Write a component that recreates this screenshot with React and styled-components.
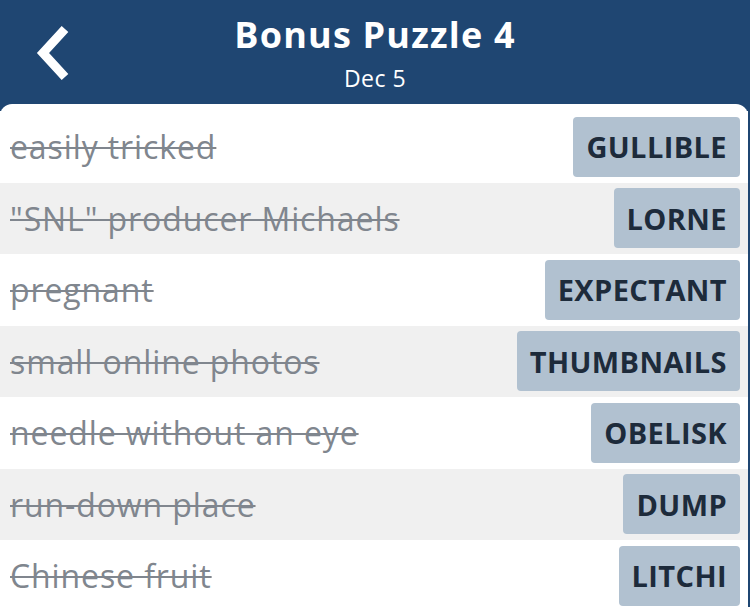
import React from 'react';
import styled, { createGlobalStyle } from 'styled-components';

const GlobalStyle = createGlobalStyle`
  html, body {
    margin: 0;
    padding: 0;
    background: #1f4672;
    font-family: "Open Sans", Lato, sans-serif;
  }
`;

const Page = styled.div`
  width: 750px;
  height: 607px;
  overflow: hidden;
  background: #1f4672;
  display: flex;
  flex-direction: column;
`;

const Header = styled.header`
  height: 104px;
  flex-shrink: 0;
  display: flex;
  flex-direction: column;
  align-items: center;
  position: relative;
  color: #fff;
`;

const BackButton = styled.button`
  position: absolute;
  left: 30px;
  top: 24px;
  width: 46px;
  height: 58px;
  border: 0;
  padding: 0;
  background: none;
  display: flex;
  align-items: center;
  justify-content: center;
`;

const Title = styled.h1`
  margin: 12px 0 0;
  font-size: 36px;
  font-weight: 700;
  line-height: 46px;
  letter-spacing: 1.2px;
`;

const Subtitle = styled.div`
  font-size: 23px;
  line-height: 28px;
  margin-top: 6px;
  letter-spacing: 0.5px;
`;

const Card = styled.div`
  flex: 1;
  margin: 0 2px 0 0;
  background: #fff;
  border-radius: 12px 12px 0 0;
  padding-top: 7px;
`;

const Row = styled.div`
  height: 71.5px;
  display: flex;
  align-items: center;
  justify-content: space-between;
  padding: 0 8px 0 10px;
  box-sizing: border-box;
  background: ${p => (p.$shaded ? '#f0f0f0' : '#fff')};
`;

const Clue = styled.span`
  font-size: 32px;
  color: #80868e;
  text-decoration: line-through;
  text-decoration-thickness: 2px;
  letter-spacing: 0.9px;
`;

const Answer = styled.span`
  height: 60px;
  display: flex;
  align-items: center;
  padding: 0 13px;
  background: #b1c1d0;
  border-radius: 4px;
  color: #1d2b3b;
  font-size: 29px;
  font-weight: 700;
  letter-spacing: 0.4px;
`;

const clues = [
  ['easily tricked', 'GULLIBLE'],
  ['"SNL" producer Michaels', 'LORNE'],
  ['pregnant', 'EXPECTANT'],
  ['small online photos', 'THUMBNAILS'],
  ['needle without an eye', 'OBELISK'],
  ['run-down place', 'DUMP'],
  ['Chinese fruit', 'LITCHI'],
];

export default function App() {
  return (
    <Page>
      <GlobalStyle />
      <Header>
        <BackButton aria-label="Back">
          <svg width="40" height="56" viewBox="0 0 40 56">
            <path d="M32 4 L10 28 L32 52" fill="none" stroke="#fff" strokeWidth="9" strokeLinejoin="miter" />
          </svg>
        </BackButton>
        <Title>Bonus Puzzle 4</Title>
        <Subtitle>Dec 5</Subtitle>
      </Header>
      <Card>
        {clues.map(([clue, answer], i) => (
          <Row key={answer} $shaded={i % 2 === 1}>
            <Clue>{clue}</Clue>
            <Answer>{answer}</Answer>
          </Row>
        ))}
      </Card>
    </Page>
  );
}
